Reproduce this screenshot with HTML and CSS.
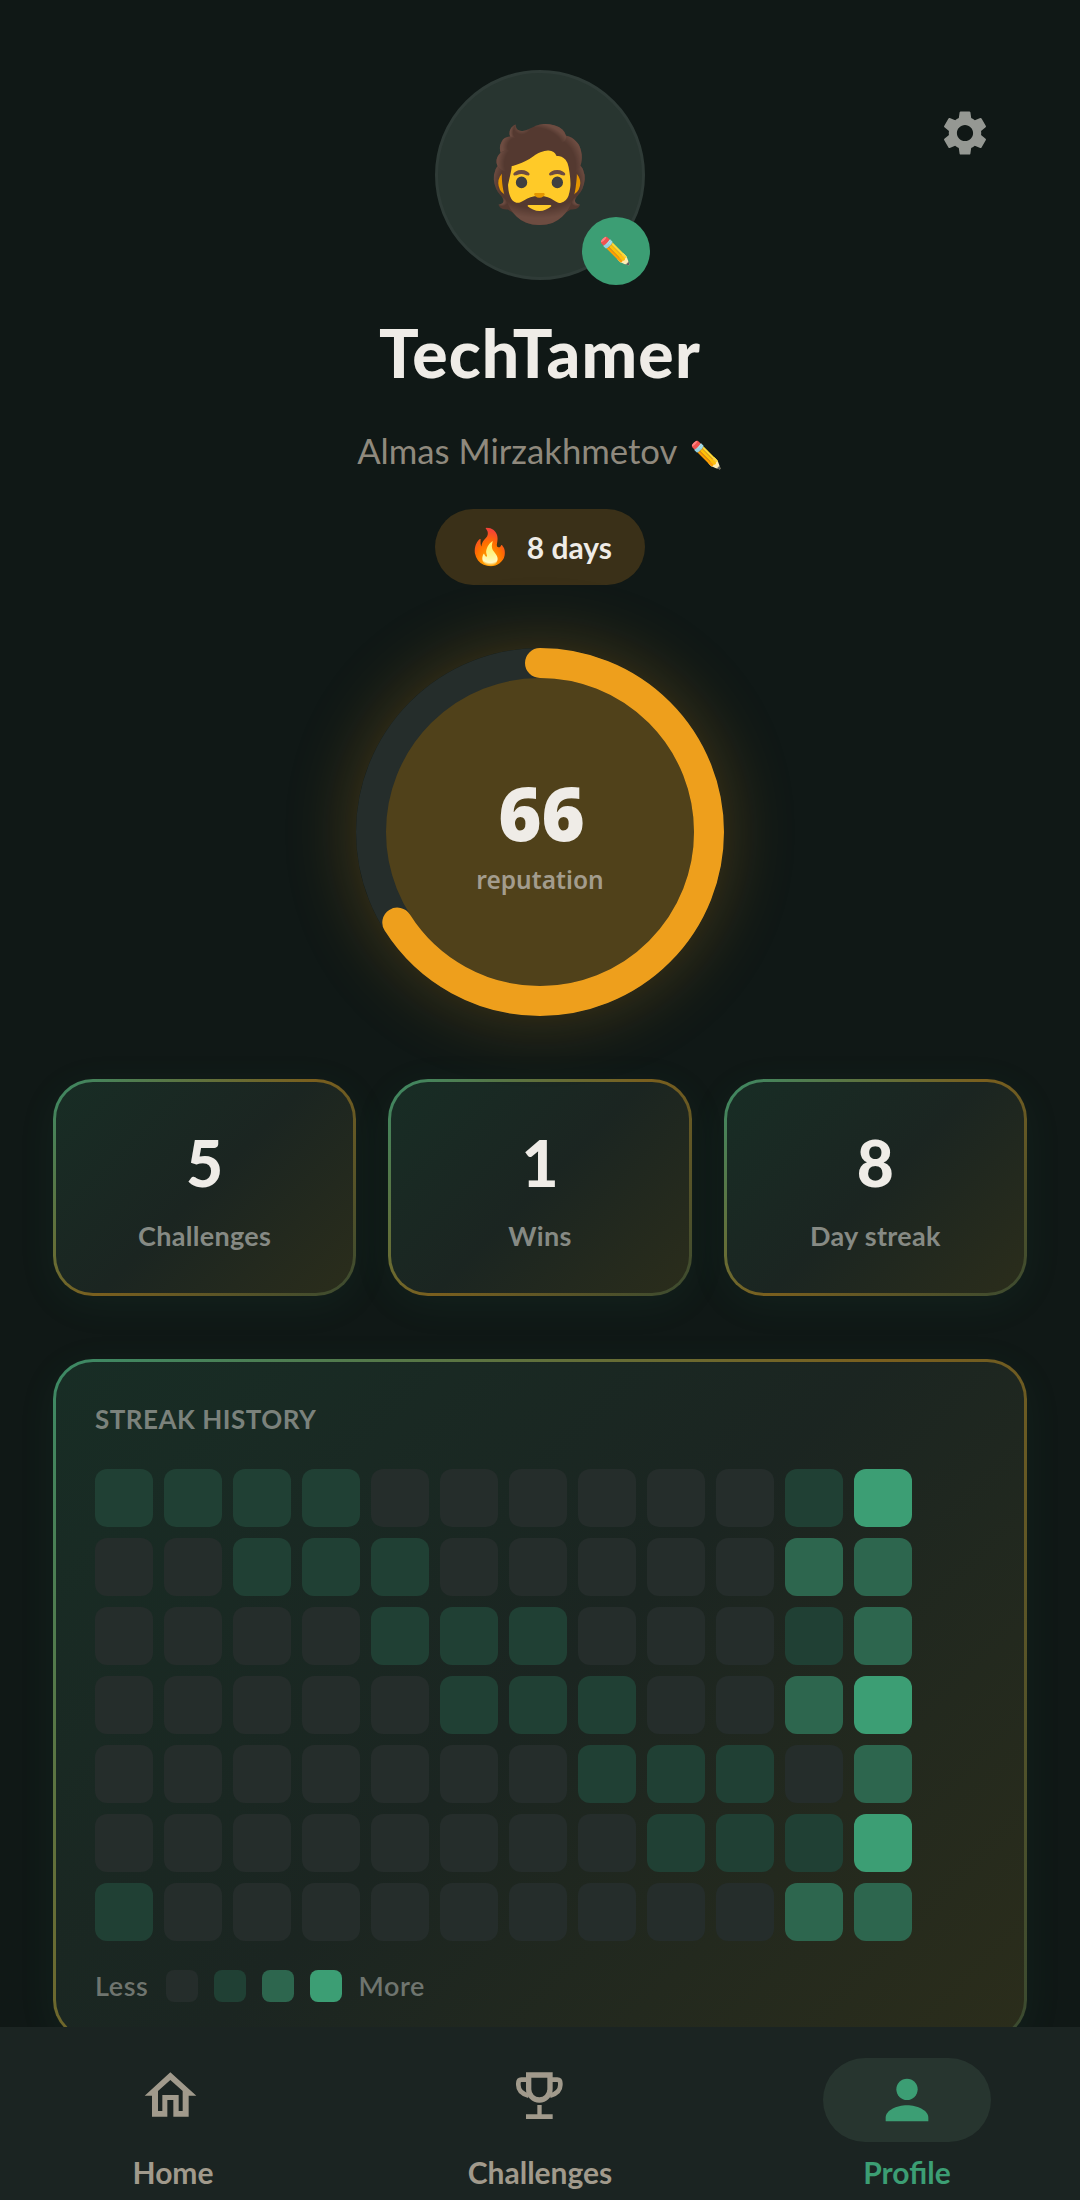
FILE: index.html
```html
<!DOCTYPE html>
<html lang="en">
<head>
<meta charset="utf-8">
<title>Profile</title>
<link rel="stylesheet" href="styles.css">
</head>
<body>
<div class="screen">
  <button class="settings" aria-label="Settings">
    <svg viewBox="0 0 24 24" class="gear"><path d="M19.14 12.94c.04-.3.06-.61.06-.94 0-.32-.02-.64-.07-.94l2.03-1.58c.18-.14.23-.41.12-.61l-1.92-3.32c-.12-.22-.37-.29-.59-.22l-2.39.96c-.5-.38-1.03-.7-1.62-.94l-.36-2.54c-.04-.24-.24-.41-.48-.41h-3.84c-.24 0-.43.17-.47.41l-.36 2.54c-.59.24-1.13.57-1.62.94l-2.39-.96c-.22-.08-.47 0-.59.22L2.74 8.87c-.12.21-.08.47.12.61l2.03 1.58c-.05.3-.09.63-.09.94s.02.64.07.94l-2.03 1.58c-.18.14-.23.41-.12.61l1.92 3.32c.12.22.37.29.59.22l2.39-.96c.5.38 1.03.7 1.62.94l.36 2.54c.05.24.24.41.48.41h3.84c.24 0 .44-.17.47-.41l.36-2.54c.59-.24 1.13-.56 1.62-.94l2.39.96c.22.08.47 0 .59-.22l1.92-3.32c.12-.22.07-.47-.12-.61l-2.01-1.58zM12 15.6c-1.98 0-3.6-1.62-3.6-3.6s1.62-3.6 3.6-3.6 3.6 1.62 3.6 3.6-1.62 3.6-3.6 3.6z"/></svg>
  </button>

  <section class="profile">
    <div class="avatar">
      <span class="avatar-emoji">🧔</span>
      <span class="avatar-edit">✏️</span>
    </div>
    <h1 class="name">TechTamer</h1>
    <p class="fullname">Almas Mirzakhmetov <span class="pencil">✏️</span></p>
    <div class="streak-pill"><span class="flame">🔥</span><span class="pill-text">8 days</span></div>
  </section>

  <section class="ring">
    <svg class="ring-svg" viewBox="0 0 368 368">
      <circle class="ring-fill" cx="184" cy="184" r="155"/>
      <circle class="ring-track" cx="184" cy="184" r="169"/>
      <circle class="ring-arc" cx="184" cy="184" r="169" pathLength="100" stroke-dasharray="66 100" transform="rotate(-90 184 184)"/>
    </svg>
    <div class="ring-label">
      <span class="ring-value">66</span>
      <span class="ring-caption">reputation</span>
    </div>
  </section>

  <section class="stats">
    <div class="card stat"><span class="stat-value">5</span><span class="stat-label">Challenges</span></div>
    <div class="card stat"><span class="stat-value">1</span><span class="stat-label">Wins</span></div>
    <div class="card stat"><span class="stat-value">8</span><span class="stat-label">Day streak</span></div>
  </section>

  <section class="card history">
    <h2 class="history-title">STREAK HISTORY</h2>
    <div class="grid">
      <i class="c l1"></i><i class="c l1"></i><i class="c l1"></i><i class="c l1"></i><i class="c"></i><i class="c"></i><i class="c"></i><i class="c"></i><i class="c"></i><i class="c"></i><i class="c l1"></i><i class="c l3"></i>
      <i class="c"></i><i class="c"></i><i class="c l1"></i><i class="c l1"></i><i class="c l1"></i><i class="c"></i><i class="c"></i><i class="c"></i><i class="c"></i><i class="c"></i><i class="c l2"></i><i class="c l2"></i>
      <i class="c"></i><i class="c"></i><i class="c"></i><i class="c"></i><i class="c l1"></i><i class="c l1"></i><i class="c l1"></i><i class="c"></i><i class="c"></i><i class="c"></i><i class="c l1"></i><i class="c l2"></i>
      <i class="c"></i><i class="c"></i><i class="c"></i><i class="c"></i><i class="c"></i><i class="c l1"></i><i class="c l1"></i><i class="c l1"></i><i class="c"></i><i class="c"></i><i class="c l2"></i><i class="c l3"></i>
      <i class="c"></i><i class="c"></i><i class="c"></i><i class="c"></i><i class="c"></i><i class="c"></i><i class="c"></i><i class="c l1"></i><i class="c l1"></i><i class="c l1"></i><i class="c"></i><i class="c l2"></i>
      <i class="c"></i><i class="c"></i><i class="c"></i><i class="c"></i><i class="c"></i><i class="c"></i><i class="c"></i><i class="c"></i><i class="c l1"></i><i class="c l1"></i><i class="c l1"></i><i class="c l3"></i>
      <i class="c l1"></i><i class="c"></i><i class="c"></i><i class="c"></i><i class="c"></i><i class="c"></i><i class="c"></i><i class="c"></i><i class="c"></i><i class="c"></i><i class="c l2"></i><i class="c l2"></i>
    </div>
    <div class="legend">
      <span class="legend-less">Less</span>
      <i class="k"></i><i class="k l1"></i><i class="k l2"></i><i class="k l3"></i>
      <span>More</span>
    </div>
  </section>

  <nav class="nav">
    <a class="nav-item">
      <span class="nav-icon">
        <svg class="ico ico-home" viewBox="0 0 270 270"><path fill-rule="evenodd" d="M127 52L205 122H182V185H136V135H118V185H72V122H50ZM127 75L90 108V168H103V120H152V168H164V108Z"/></svg>
      </span>
      <span class="nav-label">Home</span>
    </a>
    <a class="nav-item">
      <span class="nav-icon">
        <svg class="ico ico-cup" viewBox="0 0 300 270">
          <path class="cup" d="M116 60H180V103a32 32 0 0 1-64 0Z"/>
          <path class="handle" d="M116 74H94Q85 74 85 85V90Q85 114 116 122"/>
          <path class="handle" d="M180 74H202Q211 74 211 85V90Q211 114 180 122"/>
          <path d="M142 150H155V178H188V192H108V178H142Z"/>
        </svg>
      </span>
      <span class="nav-label">Challenges</span>
    </a>
    <a class="nav-item active">
      <span class="nav-icon">
        <svg class="ico" viewBox="0 0 24 24"><circle cx="12" cy="8" r="4"/><path d="M12 14c-4 0-8 2-8 4.6V20h16v-1.4c0-2.6-4-4.6-8-4.6z"/></svg>
      </span>
      <span class="nav-label">Profile</span>
    </a>
  </nav>
</div>
</body>
</html>
```
FILE: styles.css
```css
* { box-sizing: border-box; }
html, body { margin: 0; padding: 0; }
body { background: #101816; font-family: "Lato", "Noto Sans", sans-serif; }

.screen {
  position: relative;
  width: 1080px;
  height: 2200px;
  overflow: hidden;
  background: #101816;
  padding-top: 70px;
}

.settings {
  position: absolute;
  top: 106px;
  left: 938px;
  width: 54px;
  height: 54px;
  padding: 0;
  border: 0;
  background: none;
}
.gear { display: block; width: 54px; height: 54px; fill: #959893; }

.profile { display: flex; flex-direction: column; align-items: center; }

.avatar {
  position: relative;
  width: 210px;
  height: 210px;
  border-radius: 50%;
  background: #283530;
  border: 3px solid #2f3b37;
  display: flex;
  align-items: center;
  justify-content: center;
}
.avatar-emoji { font-family: "Noto Color Emoji", sans-serif; font-size: 92px; line-height: 1; }
.avatar-edit {
  position: absolute;
  right: -8px;
  bottom: -8px;
  width: 68px;
  height: 68px;
  border-radius: 50%;
  background: #3c9e74;
  display: flex;
  align-items: center;
  justify-content: center;
  font-family: "Noto Color Emoji", sans-serif;
  font-size: 26px;
}

.name {
  margin: 33px 0 0;
  font-size: 66px;
  line-height: 80px;
  font-weight: 900;
  letter-spacing: 1.2px;
  color: #efece7;
}
.fullname {
  margin: 36px 0 0;
  font-size: 34.7px;
  line-height: 44px;
  font-weight: 400;
  color: #8f897d;
  height: 46px;
}
.pencil { font-family: "Noto Color Emoji", sans-serif; font-size: 26px; margin-left: 5px; }

.streak-pill {
  margin-top: 34px;
  width: 210px;
  height: 76px;
  border-radius: 38px;
  background: #3a3018;
  display: flex;
  align-items: center;
  justify-content: center;
  gap: 15px;
}
.flame { font-family: "Noto Color Emoji", sans-serif; font-size: 35px; line-height: 1; }
.pill-text { font-size: 30px; font-weight: 700; color: #efece7; }

.ring {
  position: relative;
  width: 368px;
  height: 368px;
  margin: 63px auto 0;
  border-radius: 50%;
  box-shadow: 0 0 70px rgba(238, 159, 28, 0.25);
}
.ring-svg { display: block; width: 368px; height: 368px; }
.ring-fill { fill: #50411a; }
.ring-track { fill: none; stroke: #252d2b; stroke-width: 30; }
.ring-arc { fill: none; stroke: #ee9f1c; stroke-width: 30; stroke-linecap: round; }
.ring-label {
  position: absolute;
  inset: 0;
  padding-top: 8px;
  display: flex;
  flex-direction: column;
  align-items: center;
  justify-content: center;
  font-family: "Noto Sans", sans-serif;
}
.ring-value { margin-left: 3px; font-size: 74px; line-height: 74px; font-weight: 900; color: #efece7; }
.ring-caption { margin-top: 14px; font-size: 24.5px; line-height: 32px; font-weight: 600; color: #a39c8d; }

.card {
  border: 3px solid transparent;
  border-radius: 40px;
  background:
    linear-gradient(135deg, #182d25 0%, #1b2521 50%, #2b2d1b 100%) padding-box,
    linear-gradient(135deg, #3c8a66 0%, #7a5f1e 50%, #3a4a30 100%) border-box;
  box-shadow: 0 8px 40px rgba(60, 158, 116, 0.07);
}

.stats {
  display: grid;
  grid-template-columns: repeat(3, 1fr);
  gap: 32px;
  margin: 63px 53px 0;
}
.stat {
  height: 217px;
  display: flex;
  flex-direction: column;
  align-items: center;
  padding-top: 41px;
}
.stat-value { font-size: 64px; line-height: 80px; font-weight: 900; color: #efece7; }
.stat-label { font-size: 27px; line-height: 36px; font-weight: 700; letter-spacing: 0.3px; color: #868a84; margin-top: 15px; }

.history {
  margin: 63px 53px 0;
  padding: 39px 39px 0;
  height: 681px;
}
.history-title {
  margin: 0;
  font-size: 26px;
  line-height: 36px;
  font-weight: 700;
  letter-spacing: 0.5px;
  color: #7b827c;
}
.grid {
  display: grid;
  grid-template-columns: repeat(12, 58px);
  grid-auto-rows: 58px;
  gap: 11px;
  margin-top: 32px;
}
.c { display: block; border-radius: 12px; background: #252d2b; }
.k { display: block; width: 32px; height: 32px; border-radius: 8px; background: #252d2b; }
.l1 { background: #204034; }
.l2 { background: #2d664e; }
.l3 { background: #3c9e74; }

.legend {
  display: flex;
  align-items: center;
  gap: 16px;
  margin-top: 28px;
  font-size: 27px;
  font-weight: 600;
  letter-spacing: 0.6px;
  color: #6f756f;
}
.legend-less { margin-right: 2px; }

.nav {
  position: absolute;
  left: 0;
  right: 0;
  bottom: 0;
  height: 173px;
  background: #1b2422;
  display: flex;
  justify-content: space-between;
}
.nav-item {
  width: 346px;
  display: flex;
  flex-direction: column;
  align-items: center;
  padding-top: 31px;
  color: #a19a8c;
}
.nav-icon {
  width: 168px;
  height: 84px;
  border-radius: 42px;
  display: flex;
  align-items: center;
  justify-content: center;
}
.active .nav-icon { background: #27352f; }
.ico { display: block; width: 64px; height: 64px; fill: currentColor; flex: none; }
.ico-home { width: 90px; height: 90px; }
.ico-cup { width: 100px; height: 90px; }
.cup, .handle { fill: none; stroke: currentColor; }
.cup { stroke-width: 16; }
.handle { stroke-width: 14; }
.nav-label { font-size: 30px; line-height: 36px; font-weight: 700; margin-top: 12px; }
.active { color: #3c9e74; }
```
